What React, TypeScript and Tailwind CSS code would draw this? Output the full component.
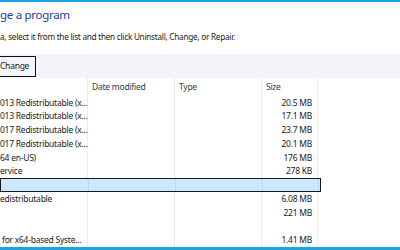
import React from "react";

type Row = { name: string; size: string; selected?: boolean };

const rows: Row[] = [
  { name: "013 Redistributable (x...", size: "20.5 MB" },
  { name: "013 Redistributable (x...", size: "17.1 MB" },
  { name: "017 Redistributable (x...", size: "23.7 MB" },
  { name: "017 Redistributable (x...", size: "20.1 MB" },
  { name: "64 en-US)", size: "176 MB" },
  { name: "ervice", size: "278 KB" },
  { name: "", size: "", selected: true },
  { name: "edistributable", size: "6.08 MB" },
  { name: "", size: "221 MB" },
  { name: "", size: "" },
  { name: "\u00a0for x64-based Syste...", size: "1.41 MB" },
];

function Cells({ r, sel }: { r: Row; sel?: boolean }) {
  const line = sel ? "border-[#b9d6ee]" : "border-[#ebebeb]";
  return (
    <>
      <div className={`w-[88px] shrink-0 h-full border-r ${line} whitespace-nowrap`}>{r.name}</div>
      <div className={`w-[87px] shrink-0 h-full border-r ${line}`}></div>
      <div className={`w-[87px] shrink-0 h-full border-r ${line}`}></div>
      <div className={`w-[56px] shrink-0 h-full border-r ${line} text-right pr-[5px] whitespace-nowrap`}>{r.size}</div>
    </>
  );
}

export default function App() {
  return (
    <div className="w-[400px] h-[250px] bg-white overflow-hidden flex flex-col font-['Noto_Sans',sans-serif] text-[#1a1a1a] tracking-[-0.25px]">
      <div className="h-[2px] bg-[#19a6e6] shrink-0" />
      <div className="mt-[5px] text-[11.5px] leading-[16px] tracking-[-0.3px] text-[#1f3c99] whitespace-nowrap">ge a program</div>
      <div className="mt-[8px] text-[8.2px] leading-[12px] whitespace-nowrap">
        a, select it from the list and then click Uninstall, Change, or Repair.
      </div>
      <div className="mt-[11px] h-[24px] bg-[#f3f5f8] shrink-0 flex items-start">
        <div className="mt-[2px] h-[21px] border-y border-r border-[#111] pr-[6px] flex items-center text-[8.5px] leading-none">
          Change
        </div>
      </div>
      <div className="flex h-[17.5px] shrink-0 text-[8.5px] leading-[17.5px] text-[#333a44]">
        <div className="w-[88px] shrink-0 border-r border-[#ebebeb]"></div>
        <div className="w-[87px] shrink-0 border-r border-[#ebebeb] pl-[4px]">Date modified</div>
        <div className="w-[87px] shrink-0 border-r border-[#ebebeb] pl-[4px]">Type</div>
        <div className="w-[56px] shrink-0 border-r border-[#ebebeb] pl-[4px]">Size</div>
      </div>
      {rows.map((r, i) =>
        r.selected ? (
          <div
            key={i}
            className="flex h-[13.8px] shrink-0 w-[321px] bg-[#cce8ff] border border-[#1a1a1a] text-[8.5px] leading-[12px]"
          >
            <Cells r={r} sel />
          </div>
        ) : (
          <div key={i} className="flex h-[13.8px] shrink-0 text-[8.5px] leading-[13.8px]">
            <Cells r={r} />
          </div>
        )
      )}
      <div className="h-[3px] bg-[#19a6e6] shrink-0" />
    </div>
  );
}
